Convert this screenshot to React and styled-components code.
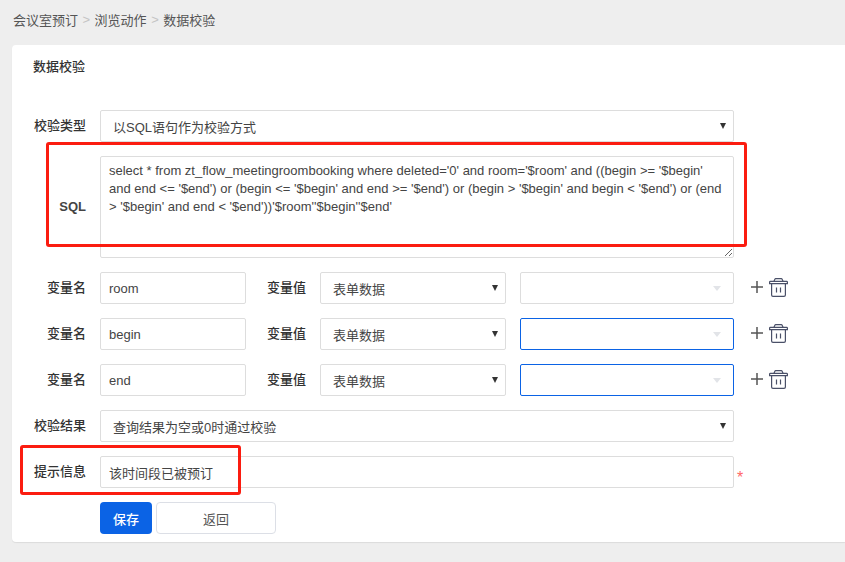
import React from 'react';
import styled, { createGlobalStyle } from 'styled-components';

const SQL_TEXT = `select * from zt_flow_meetingroombooking where deleted='0' and room='$room' and ((begin >= '$begin' and end <= '$end') or (begin <= '$begin' and end >= '$end') or (begin > '$begin' and begin < '$end') or (end > '$begin' and end < '$end'))'$room''$begin''$end'`;

const variables = [
  { name: 'room', focused: false },
  { name: 'begin', focused: true },
  { name: 'end', focused: true },
];

const App = () => (
  <Page>
    <GlobalStyle />
    <Breadcrumb>
      <span>会议室预订</span>
      <Sep>&gt;</Sep>
      <span>浏览动作</span>
      <Sep>&gt;</Sep>
      <span>数据校验</span>
    </Breadcrumb>
    <Card>
      <Title>数据校验</Title>
      <Form>
        <Row>
          <Label>校验类型</Label>
          <SelectBox $width="634px">以SQL语句作为校验方式</SelectBox>
        </Row>
        <Row>
          <SqlLabel>SQL</SqlLabel>
          <SqlArea defaultValue={SQL_TEXT} spellCheck={false} />
          <Highlight $left="34px" $top="-14px" $width="701px" $height="105px" />
        </Row>
        {variables.map((item) => (
          <Row key={item.name}>
            <Label>变量名</Label>
            <TextInput $width="146px" defaultValue={item.name} />
            <VarLabel>变量值</VarLabel>
            <SelectBox $width="186px">表单数据</SelectBox>
            <ChosenBox $focused={item.focused} />
            <Actions>
              <PlusIcon />
              <TrashIcon />
            </Actions>
          </Row>
        ))}
        <Row>
          <Label>校验结果</Label>
          <SelectBox $width="634px">查询结果为空或0时通过校验</SelectBox>
        </Row>
        <Row>
          <Label>提示信息</Label>
          <TextInput $width="634px" defaultValue="该时间段已被预订" />
          <Required>*</Required>
          <Highlight $left="8px" $top="-11px" $width="221px" $height="50px" />
        </Row>
        <ButtonRow>
          <SaveButton>保存</SaveButton>
          <BackButton>返回</BackButton>
        </ButtonRow>
      </Form>
    </Card>
  </Page>
);

const PlusIcon = () => (
  <svg width="12" height="12" viewBox="0 0 12 12" fill="none" stroke="#555" strokeWidth="1.5">
    <path d="M0 6h12M6 0v12" />
  </svg>
);

const TrashIcon = () => (
  <svg width="19" height="19" viewBox="0 0 19 19" fill="none" stroke="#4a5068" strokeWidth="1.2">
    <path d="M0.6 5.6v-1.4q0-.8.8-.8h16.2q.8 0 .8.8v1.4z" />
    <path d="M5 3.2l1-2.2q.2-.4.6-.4h5.8q.4 0 .6.4l1 2.2" />
    <path d="M2.6 5.6v11.4q0 1.4 1.4 1.4h11q1.4 0 1.4-1.4V5.6" />
    <path d="M7.5 9.5v5M11.5 9.5v5" />
  </svg>
);

const GlobalStyle = createGlobalStyle`
  html, body {
    margin: 0;
    padding: 0;
    background: #eeeeee;
  }
  * {
    box-sizing: border-box;
  }
  body, input, textarea, button {
    font-family: "Liberation Sans", "Noto Sans CJK SC", sans-serif;
  }
`;

const Page = styled.div`
  width: 845px;
  height: 562px;
  overflow: hidden;
  padding-left: 12px;
  background: #eeeeee;
`;

const Breadcrumb = styled.div`
  display: flex;
  align-items: center;
  height: 45px;
  padding: 0 0 6px 1px;
  font-size: 13px;
  color: #555;
`;

const Sep = styled.span`
  margin: 0 4.5px;
  color: #c4c4c4;
`;

const Card = styled.div`
  height: 497px;
  background: #fff;
  border-radius: 4px 0 0 4px;
  box-shadow: 0 1px 1px rgba(0, 0, 0, 0.08);
`;

const Title = styled.div`
  height: 65px;
  padding: 13px 0 0 21px;
  font-size: 13px;
  line-height: 18px;
  font-weight: 500;
  color: #333;
`;

const Form = styled.div`
  display: flex;
  flex-direction: column;
  gap: 14px;
`;

const Row = styled.div`
  position: relative;
  display: flex;
  align-items: center;
`;

const Label = styled.div`
  width: 74px;
  margin-right: 14px;
  padding-bottom: 4px;
  text-align: right;
  font-size: 13px;
  font-weight: 500;
  color: #333;
`;

const SqlLabel = styled(Label)`
  padding-bottom: 2px;
  font-weight: bold;
  color: #444;
`;

const VarLabel = styled(Label)`
  width: 60px;
  margin-right: 14px;
`;

const TextInput = styled.input`
  width: ${(p) => p.$width};
  height: 32px;
  padding: 0 8px;
  border: 1px solid #ddd;
  border-radius: 2px;
  outline: none;
  font-size: 13px;
  color: #444;
`;

const SelectBox = styled.div`
  position: relative;
  display: flex;
  align-items: center;
  width: ${(p) => p.$width};
  height: 32px;
  margin-right: 14px;
  padding: 0 0 0 12px;
  border: 1px solid #ddd;
  border-radius: 2px;
  font-size: 13px;
  color: #444;
  &::after {
    content: '';
    position: absolute;
    top: 12px;
    right: 7px;
    border-style: solid;
    border-width: 6px 3.5px 0;
    border-color: #333 transparent transparent;
  }
`;

const ChosenBox = styled.div`
  position: relative;
  width: 214px;
  height: 32px;
  border: 1px solid ${(p) => (p.$focused ? '#0b63e5' : '#ddd')};
  border-radius: 2px;
  &::after {
    content: '';
    position: absolute;
    top: 13px;
    right: 12px;
    border-style: solid;
    border-width: 5px 4px 0;
    border-color: #e2e4e8 transparent transparent;
  }
`;

const SqlArea = styled.textarea`
  display: block;
  width: 634px;
  height: 102px;
  padding: 5px 8px;
  border: 1px solid #ddd;
  border-radius: 2px;
  outline: none;
  font-size: 13px;
  line-height: 18px;
  color: #444;
  resize: vertical;
`;

const Highlight = styled.div`
  position: absolute;
  left: ${(p) => p.$left};
  top: ${(p) => p.$top};
  width: ${(p) => p.$width};
  height: ${(p) => p.$height};
  border: 3px solid #fb1c10;
  border-radius: 3px;
  pointer-events: none;
`;

const Actions = styled.div`
  display: flex;
  align-items: center;
  gap: 6px;
  margin: 0 0 2px 17px;
`;

const Required = styled.span`
  margin: 12px 0 0 3px;
  font-size: 16px;
  line-height: 14px;
  color: #f66;
`;

const ButtonRow = styled.div`
  display: flex;
  gap: 4px;
  padding-left: 88px;
`;

const SaveButton = styled.button`
  width: 52px;
  height: 32px;
  padding: 0;
  border: none;
  border-radius: 4px;
  background: #0b63e5;
  font-size: 13px;
  font-weight: 500;
  color: #fff;
`;

const BackButton = styled.button`
  width: 120px;
  height: 32px;
  padding: 0;
  border: 1px solid #dcdfe6;
  border-radius: 4px;
  background: #fff;
  font-size: 13px;
  color: #555;
`;

export default App;
